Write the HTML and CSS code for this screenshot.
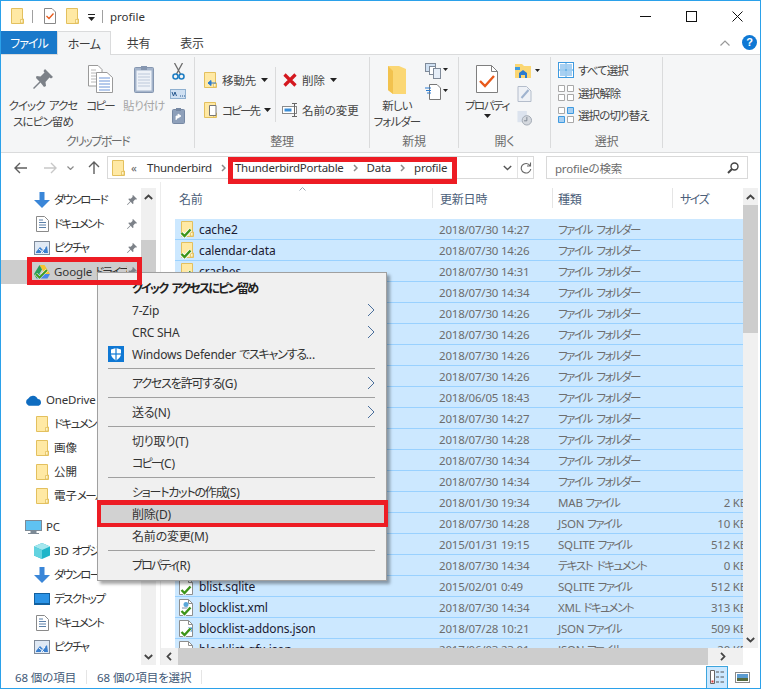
FILE: index.html
```html
<!DOCTYPE html>
<html lang="ja">
<head>
<meta charset="utf-8">
<title>profile</title>
<link rel="stylesheet" href="styles.css">
</head>
<body>
<svg class="defs" width="0" height="0" aria-hidden="true">
  <defs>
    <symbol id="folder" viewBox="0 0 13 16">
      <path d="M.5.5H11.5V11H12.5V15.5H.5Z" fill="#ffe9a4" stroke="#e3c05e"/>
      <path d="M9.5 11.5H12V15H9.5Z" fill="#fff3c8" stroke="#e3c05e" stroke-width=".8"/>
    </symbol>
    <symbol id="check" viewBox="0 0 12 10">
      <path d="M1.500 5 4.500 8 10.500 1.500" fill="none" stroke="#fff" stroke-width="4"/>
      <path d="M1.500 5 4.500 8 10.500 1.500" fill="none" stroke="#3c9418" stroke-width="2.400"/>
    </symbol>
    <symbol id="pin" viewBox="0 0 20 20">
      <path d="M12 0 20 8 18 9.5 16.5 8.5 12.5 13 13 17 11 18 7.5 13.500 1 20 0 19 6.500 12.500 3 9 3.500 7 7.500 7.500 11.500 3.500 10.500 2Z" fill="#7c8188"/>
    </symbol>
    <symbol id="down" viewBox="0 0 16 16">
      <path d="M5.500 0H10.500V8H16L8 16 0 8H5.500Z" fill="#3a86d8"/>
    </symbol>
    <symbol id="doc" viewBox="0 0 13 16">
      <path d="M.5.5H8.500L12.500 4.500V15.500H.5Z" fill="#fff" stroke="#8a8a8a"/>
      <path d="M3 4H7M3 6.500H10M3 9H10M3 11.500H10" stroke="#5a7fa8"/>
    </symbol>
    <symbol id="pic" viewBox="0 0 16 14">
      <rect x=".5" y=".5" width="15" height="13" fill="#dfe9f5" stroke="#7f8a99"/>
      <path d="M2 11 6 6 9 9 13 5 14 12H2Z" fill="#3a7fcf"/>
      <path d="M5 8 10 12M11 7 7 12" stroke="#fff"/>
    </symbol>
    <symbol id="file" viewBox="0 0 16 17">
      <path d="M1.500.5H10.500L14.500 4.500V16.500H1.500Z" fill="#fff" stroke="#8e8e8e"/>
      <path d="M10.500.5V4.500H14.500" fill="none" stroke="#8e8e8e"/>
    </symbol>
    <symbol id="filexml" viewBox="0 0 16 17">
      <path d="M1.500.5H10.500L14.500 4.500V16.500H1.500Z" fill="#fff" stroke="#8e8e8e"/>
      <path d="M10.500.5V4.500H14.500" fill="none" stroke="#8e8e8e"/>
      <circle cx="8" cy="5.500" r="2.500" fill="#5aa7d8"/>
      <path d="M4 9H12M7 11.500H12" stroke="#7a8fa8"/>
    </symbol>
    <symbol id="filejson" viewBox="0 0 16 17">
      <path d="M1.500.5H10.500L14.500 4.500V16.500H1.500Z" fill="#fff" stroke="#8e8e8e"/>
      <path d="M10.500.5V4.500H14.500" fill="none" stroke="#8e8e8e"/>
      <path d="M8 14 13 8.500M10 8.500H13V11.500" fill="none" stroke="#1f7fd0" stroke-width="1.800"/>
    </symbol>
    <symbol id="chev" viewBox="0 0 8 14">
      <path d="M1 1 7 7 1 13" fill="none" stroke="#4a6f9c" stroke-width="1"/>
    </symbol>
    <symbol id="caret" viewBox="0 0 7 4">
      <path d="M0 0H7L3.500 4Z" fill="#222"/>
    </symbol>
    <symbol id="up" viewBox="0 0 9 6">
      <path d="M.8 5 4.500 1.500 8.200 5" fill="none" stroke="#444" stroke-width="1.800"/>
    </symbol>
    <symbol id="dn" viewBox="0 0 9 6">
      <path d="M.8 1 4.500 4.500 8.200 1" fill="none" stroke="#444" stroke-width="1.800"/>
    </symbol>
    <symbol id="lf" viewBox="0 0 6 9">
      <path d="M5 .8 1.500 4.500 5 8.200" fill="none" stroke="#444" stroke-width="1.800"/>
    </symbol>
    <symbol id="rt" viewBox="0 0 6 9">
      <path d="M1 .8 4.500 4.500 1 8.200" fill="none" stroke="#444" stroke-width="1.800"/>
    </symbol>
    <symbol id="crumb" viewBox="0 0 5 8">
      <path d="M1 1 4 4 1 7" fill="none" stroke="#8a8a8a" stroke-width="1.500"/>
    </symbol>
    <symbol id="propdoc" viewBox="0 0 22 28">
      <path d="M.5.5H15.500L21.500 6.500V27.500H.5Z" fill="#fff" stroke="#7f7f7f"/>
      <path d="M15.500.5V6.500H21.500" fill="none" stroke="#7f7f7f"/>
      <path d="M4 16 9 21 18 11" fill="none" stroke="#e8591a" stroke-width="2.400"/>
    </symbol>
  </defs>
</svg>

<div class="window">
  <header class="titlebar">
    <svg class="ico13x16"><use href="#folder"/></svg>
    <span class="vline"></span>
    <svg class="qdoc" viewBox="0 0 12 16"><path d="M.5.5H8L11.500 4V15.500H.5Z" fill="#fff" stroke="#888"/><path d="M2.500 8 5 10.500 9.500 5.500" fill="none" stroke="#e8591a" stroke-width="1.300"/></svg>
    <svg class="ico13x16 qf"><use href="#folder"/></svg>
    <svg class="qarrow" viewBox="0 0 7 7"><path d="M0 0H7V1H0ZM0 3H7L3.500 7Z" fill="#222"/></svg>
    <span class="vline vline-b"></span>
    <span class="wintitle">profile</span>
    <div class="winctl">
      <svg class="ctl" viewBox="0 0 11 11"><path d="M0 5.500H11" stroke="#111"/></svg>
      <svg class="ctl" viewBox="0 0 11 11"><rect x=".5" y=".5" width="10" height="10" fill="none" stroke="#111"/></svg>
      <svg class="ctl" viewBox="0 0 11 11"><path d="M.5.5 10.500 10.500M10.500.5.500 10.500" stroke="#111"/></svg>
    </div>
  </header>

  <nav class="tabs">
    <span class="tab tab-file">ファイル</span>
    <span class="tab tab-home">ホーム</span>
    <span class="tab tab-share">共有</span>
    <span class="tab tab-view">表示</span>
    <div class="tabs-right">
      <svg class="collapse" viewBox="0 0 10 6"><path d="M.5 5.500 5 1 9.500 5.500" fill="none" stroke="#999" stroke-width="1.200"/></svg>
      <span class="help">?</span>
    </div>
  </nav>

  <section class="ribbon">
    <div class="group g-clip">
      <div class="gbody">
        <div class="bigbtn b-pin">
          <svg class="bigicon pinbig"><use href="#pin"/></svg>
          <span class="lab">クイック アクセ<br>スにピン留め</span>
        </div>
        <div class="bigbtn b-copy">
          <svg class="bigicon copyic" viewBox="0 0 25 28">
            <path d="M.5.5H10L14 4.500V21H.5Z" fill="#fff" stroke="#9a9a9a"/>
            <path d="M3 5H8M3 8H11M3 11H11M3 14H11M3 17H11" stroke="#b8b8b8"/>
            <path d="M8.500 7.500H19L24.500 12.500V27.500H8.500Z" fill="#fff" stroke="#9a9a9a"/>
            <path d="M11 13H22M11 16H22M11 19H22M11 22H22M11 25H22" stroke="#6d95d8"/>
          </svg>
          <span class="lab lab-tight">コピー</span>
        </div>
        <div class="bigbtn b-paste">
          <svg class="bigicon pasteic" viewBox="0 0 20 28">
            <rect x=".5" y="2.500" width="19" height="25" rx="1" fill="#a4b4cb" stroke="#8596b0"/>
            <rect x="2.500" y="5.500" width="15" height="20" fill="#eef2f8"/>
            <path d="M4 9H16M4 12H16M4 15H16M4 18H16M4 21H16" stroke="#bcc8da"/>
            <path d="M7 1H13V5H7Z" fill="#8596b0"/>
          </svg>
          <span class="lab muted">貼り付け</span>
        </div>
        <div class="smallstack">
          <svg class="scis" viewBox="0 0 13 17"><path d="M2.500 0 8.500 11M10.500 0 4.500 11" stroke="#6c6c6c" stroke-width="1.300"/><circle cx="3.500" cy="13.500" r="2.500" fill="none" stroke="#1f7fc4" stroke-width="1.600"/><circle cx="9.500" cy="13.500" r="2.500" fill="none" stroke="#1f7fc4" stroke-width="1.600"/></svg>
          <svg class="pathic" viewBox="0 0 16 10"><rect x=".5" y=".5" width="15" height="9" fill="#cfe0f2" stroke="#8fb0d0"/><path d="M2 3 3.500 7 5 3 6.500 7M10 7H11M12 7H13M14 7H15" stroke="#2a5a90" fill="none"/></svg>
          <svg class="shortic" viewBox="0 0 13 16"><rect x=".5" y="1.500" width="12" height="14" rx="1" fill="#8ea0ba" stroke="#7688a3"/><rect x="4" y="0" width="5" height="3" fill="#7688a3"/><path d="M4 12V8H8M6 6 9 8 6 10Z" fill="#fff" stroke="#fff" stroke-width=".8"/></svg>
        </div>
      </div>
      <div class="glabel k">クリップボード</div>
    </div>

    <div class="group g-org">
      <div class="gbody">
        <div class="rowstack c-left">
          <div class="srow">
            <svg class="orgic" viewBox="0 0 13 16"><use href="#folder"/><path d="M4 11H12M4 11 7 8.500V13.500Z" stroke="#2a7bd0" fill="#2a7bd0"/></svg>
            <span class="tx">移動先</span><svg class="cr"><use href="#caret"/></svg>
          </div>
          <div class="srow">
            <svg class="orgic" viewBox="0 0 13 16"><use href="#folder"/><path d="M5.500 3.500H12V13.500H5.500Z" fill="#fff" stroke="#777"/></svg>
            <span class="tx k-org">コピー先</span><svg class="cr"><use href="#caret"/></svg>
          </div>
        </div>
        <span class="gdiv"></span>
        <div class="rowstack c-right">
          <div class="srow">
            <svg class="xic" viewBox="0 0 14 14"><path d="M1.500 1.500 12.500 12.500M12.500 1.500 1.500 12.500" stroke="#d4181f" stroke-width="3.200"/></svg>
            <span class="tx">削除</span><svg class="cr"><use href="#caret"/></svg>
          </div>
          <div class="srow">
            <svg class="renic" viewBox="0 0 16 14"><rect x=".5" y="3.500" width="14" height="7" fill="#fff" stroke="#8a8a8a"/><rect x="2.500" y="5.500" width="7" height="3" fill="#3a8ed8"/><path d="M10 .5H15M12.500.5V13.500M10 13.500H15" stroke="#666"/></svg>
            <span class="tx">名前の変更</span>
          </div>
        </div>
      </div>
      <div class="glabel">整理</div>
    </div>

    <div class="group g-new">
      <div class="gbody">
        <div class="bigbtn b-newf">
          <svg class="bigicon newfic" viewBox="0 0 18 28"><path d="M0 0H11L18 3V28H5L0 24Z" fill="#fbd774"/><path d="M0 0 5 5V28L0 24Z" fill="#f2c24e"/></svg>
          <span class="lab">新しい<br>フォルダー</span>
        </div>
        <div class="newsm">
          <svg class="nsic" viewBox="0 0 23 16"><rect x=".5" y=".5" width="10" height="8" fill="#cfe0f2" stroke="#7f8a99"/><rect x="4.500" y="3.500" width="6" height="8" fill="#fff" stroke="#7f8a99"/><rect x="8.500" y="5.500" width="7" height="10" fill="#e6eef8" stroke="#7f8a99"/><path d="M18 5H23L20.500 8Z" fill="#222"/></svg>
          <svg class="nsic" viewBox="0 0 23 16"><path d="M4.500.5H12L15.500 4V15.500H4.500Z" fill="#fff" stroke="#777"/><path d="M0 4H6M1 6.500H6M2 9H6" stroke="#2a7bd0"/><path d="M18 5H23L20.500 8Z" fill="#222"/></svg>
        </div>
      </div>
      <div class="glabel">新規</div>
    </div>

    <div class="group g-open">
      <div class="gbody">
        <div class="bigbtn b-prop">
          <svg class="bigicon propic"><use href="#propdoc"/></svg>
          <span class="lab lab-prop">プロパティ</span>
          <svg class="cr crb"><use href="#caret"/></svg>
        </div>
        <div class="opensm">
          <svg class="osic" viewBox="0 0 25 14"><path d="M0 0H7L9 2H16V14H0Z" fill="#fbd774"/><path d="M4 14V9L8 6 12 9V14H10V11H6V14Z" fill="#2a7bd0"/><rect x="0" y="3" width="5" height="3" fill="#3d9ae0"/><path d="M20 5H25L22.500 8Z" fill="#222"/></svg>
          <svg class="osic2" viewBox="0 0 14 16"><path d="M.5.5H9L13.500 5V15.500H.5Z" fill="#eef1f6" stroke="#b4bdcb"/><path d="M4 12 11 4" stroke="#9fb3cf" stroke-width="2"/></svg>
          <svg class="osic2" viewBox="0 0 16 16"><rect x=".5" y=".5" width="10" height="12" fill="#dce3ee"/><circle cx="10.500" cy="10.500" r="5" fill="#d4d8de" stroke="#a0a7b2"/><path d="M10.500 7V11H7.500" stroke="#7d8591" fill="none"/></svg>
        </div>
      </div>
      <div class="glabel">開く</div>
    </div>

    <div class="group g-sel">
      <div class="gbody">
        <div class="sellist">
          <div class="srow sel">
            <svg class="selic" viewBox="0 0 16 16"><rect x=".5" y=".5" width="15" height="15" fill="#fff" stroke="#3e9ae0"/><path d="M2 2H7V7H2ZM9 2H14V7H9ZM2 9H7V14H2ZM9 9H14V14H9Z" fill="#a8d0f2"/><path d="M1 8H15M8 1V15" stroke="#3e9ae0" stroke-width="1"/></svg>
            <span>すべて選択</span>
          </div>
          <div class="srow sel">
            <svg class="selic" viewBox="0 0 16 16"><path d="M.5.5H6.500V6.500H.5ZM9.500.5H15.500V6.500H9.500ZM.5 9.500H6.500V15.500H.5ZM9.500 9.500H15.500V15.500H9.500Z" fill="#fff" stroke="#a8a8a8"/></svg>
            <span>選択解除</span>
          </div>
          <div class="srow sel">
            <svg class="selic" viewBox="0 0 16 16"><path d="M.5 9.500H6.500V15.500H.5ZM9.500.5H15.500V6.500H9.500Z" fill="#a8d0f2" stroke="#3e9ae0"/><path d="M.5.500H6.500V6.500H.5ZM9.500 9.500H15.500V15.500H9.500Z" fill="#fff" stroke="#a8a8a8"/></svg>
            <span>選択の切り替え</span>
          </div>
        </div>
      </div>
      <div class="glabel">選択</div>
    </div>
  </section>

  <section class="addressbar">
    <svg class="nv nv-back" viewBox="0 0 13 12"><path d="M6 1 1 6 6 11M1 6H13" fill="none" stroke="#5f5f5f" stroke-width="1.400"/></svg>
    <svg class="nv nv-fwd" viewBox="0 0 13 12"><path d="M7 1 12 6 7 11M12 6H0" fill="none" stroke="#c8c8c8" stroke-width="1.400"/></svg>
    <svg class="nv-rec" viewBox="0 0 7 4"><path d="M.5.5 3.500 3.500 6.500.5" fill="none" stroke="#8a8a8a" stroke-width="1.200"/></svg>
    <svg class="nv nv-up" viewBox="0 0 12 13"><path d="M1 6 6 1 11 6M6 1V13" fill="none" stroke="#5f5f5f" stroke-width="1.400"/></svg>
    <div class="addr">
      <svg class="addr-f"><use href="#folder"/></svg>
      <span class="crumbmark">«</span>
      <span class="cb">Thunderbird</span><svg class="sepch"><use href="#crumb"/></svg>
      <span class="cb">ThunderbirdPortable</span><svg class="sepch"><use href="#crumb"/></svg>
      <span class="cb">Data</span><svg class="sepch"><use href="#crumb"/></svg>
      <span class="cb">profile</span>
      <div class="addr-end">
        <svg class="addr-dd" viewBox="0 0 9 6"><path d="M.8 1 4.500 4.500 8.200 1" fill="none" stroke="#555" stroke-width="1.400"/></svg>
        <span class="addr-sep"></span>
        <svg class="addr-rf" viewBox="0 0 12 12"><path d="M10 3.500A4.800 4.800 0 1 0 10.800 7M10.500 .5V4H7" fill="none" stroke="#666" stroke-width="1.100"/></svg>
      </div>
    </div>
    <div class="search">
      <span class="search-ph">profileの検索</span>
      <svg class="search-ic" viewBox="0 0 12 12"><circle cx="7.500" cy="4.500" r="3.500" fill="none" stroke="#444" stroke-width="1.400"/><path d="M5 7 1 11" stroke="#444" stroke-width="2"/></svg>
    </div>
  </section>

  <main class="main">
    <aside class="navpane">
      <div class="navlist">
        <div class="nav"><svg class="ni ni-dl"><use href="#down"/></svg><span class="nt nk">ダウンロード</span><svg class="npin"><use href="#pin"/></svg></div>
        <div class="nav"><svg class="ni ni-doc"><use href="#doc"/></svg><span class="nt nk">ドキュメント</span><svg class="npin"><use href="#pin"/></svg></div>
        <div class="nav"><svg class="ni ni-pic"><use href="#pic"/></svg><span class="nt nk">ピクチャ</span><svg class="npin"><use href="#pin"/></svg></div>
        <div class="nav nav-hl">
          <svg class="ni ni-gd" viewBox="0 0 16 16"><path d="M5.500 1H10.500L16 10H11Z" fill="#f4c430"/><path d="M5.500 1 0 10 2.500 14.500 8 5.500Z" fill="#2a9d5c"/><path d="M2.500 14.500H13.500L16 10H5Z" fill="#4a86e8"/><path d="M2 10 5.500 13.500 13 6" fill="none" stroke="#fff" stroke-width="3"/><path d="M2 10 5.500 13.500 13 6" fill="none" stroke="#3f9a22" stroke-width="2"/></svg>
          <span class="nt">Google <span class="nk">ドライブ</span></span><svg class="npin"><use href="#pin"/></svg>
        </div>
        <div class="nav nav-top nav-od">
          <svg class="ni-top" viewBox="0 0 18 11"><path d="M4 11A4 4 0 0 1 3.500 3.500 5.500 5.500 0 0 1 13.500 4 3.600 3.600 0 0 1 14.500 11Z" fill="#0f6cc0"/></svg>
          <span class="nt2">OneDrive</span>
        </div>
        <div class="nav"><svg class="ni ni-fo"><use href="#folder"/></svg><span class="nt nk">ドキュメント</span></div>
        <div class="nav"><svg class="ni ni-fo"><use href="#folder"/></svg><span class="nt">画像</span></div>
        <div class="nav"><svg class="ni ni-fo"><use href="#folder"/></svg><span class="nt">公開</span></div>
        <div class="nav"><svg class="ni ni-fo"><use href="#folder"/></svg><span class="nt">電子<span class="nk">メール</span></span></div>
        <div class="nav nav-top nav-pc">
          <svg class="ni-top" viewBox="0 0 17 15"><rect x=".5" y=".5" width="16" height="10" fill="#5fc2f2" stroke="#7d8a96"/><path d="M6 11H11V13H6ZM3 13.500H14" fill="#7d8a96" stroke="#7d8a96"/></svg>
          <span class="nt2">PC</span>
        </div>
        <div class="nav"><svg class="ni ni-3d" viewBox="0 0 16 16"><path d="M8 0 16 3.500V12.500L8 16 0 12.500V3.500Z" fill="#1fb5c9"/><path d="M8 7 16 3.500 8 0 0 3.500Z" fill="#a5e7ee"/><path d="M8 7V16L0 12.500V3.500Z" fill="#63d3e0"/></svg><span class="nt">3D <span class="nk">オブジェクト</span></span></div>
        <div class="nav"><svg class="ni ni-dl"><use href="#down"/></svg><span class="nt nk">ダウンロード</span></div>
        <div class="nav"><svg class="ni ni-desk" viewBox="0 0 16 12"><rect x=".5" y=".5" width="15" height="11" fill="#2b93e6" stroke="#12609f"/><path d="M1 10H15V11H1Z" fill="#12609f"/></svg><span class="nt nk">デスクトップ</span></div>
        <div class="nav"><svg class="ni ni-doc"><use href="#doc"/></svg><span class="nt nk">ドキュメント</span></div>
        <div class="nav"><svg class="ni ni-pic"><use href="#pic"/></svg><span class="nt nk">ピクチャ</span></div>
      </div>
      <div class="navscroll">
        <svg class="sa"><use href="#up"/></svg>
        <div class="navthumb"></div>
        <svg class="sa sa-end"><use href="#dn"/></svg>
      </div>
    </aside>

    <div class="content">
      <div class="contenttop">
        <div class="listarea">
          <div class="colhead">
            <span class="ch ch-name">名前<svg class="sortcaret" viewBox="0 0 7 4"><path d="M.5 3.500 3.500.5 6.500 3.500" fill="none" stroke="#9aa5b4"/></svg></span>
            <span class="ch ch-date">更新日時</span>
            <span class="ch ch-type">種類</span>
            <span class="ch ch-size k">サイズ</span>
          </div>
          <div class="rows">
            <div class="row"><span class="c-name"><span class="fi"><svg class="fi-f"><use href="#folder"/></svg><svg class="fi-c"><use href="#check"/></svg></span>cache2</span><span class="c-date">2018/07/30 14:27</span><span class="c-type k">ファイル フォルダー</span><span class="c-size"></span></div>
            <div class="row"><span class="c-name"><span class="fi"><svg class="fi-f"><use href="#folder"/></svg><svg class="fi-c"><use href="#check"/></svg></span>calendar-data</span><span class="c-date">2018/07/30 14:26</span><span class="c-type k">ファイル フォルダー</span><span class="c-size"></span></div>
            <div class="row"><span class="c-name"><span class="fi"><svg class="fi-f"><use href="#folder"/></svg><svg class="fi-c"><use href="#check"/></svg></span>crashes</span><span class="c-date">2018/07/30 14:31</span><span class="c-type k">ファイル フォルダー</span><span class="c-size"></span></div>
            <div class="row"><span class="c-name"></span><span class="c-date">2018/07/30 14:34</span><span class="c-type k">ファイル フォルダー</span><span class="c-size"></span></div>
            <div class="row"><span class="c-name"></span><span class="c-date">2018/07/30 14:26</span><span class="c-type k">ファイル フォルダー</span><span class="c-size"></span></div>
            <div class="row"><span class="c-name"></span><span class="c-date">2018/07/30 14:26</span><span class="c-type k">ファイル フォルダー</span><span class="c-size"></span></div>
            <div class="row"><span class="c-name"></span><span class="c-date">2018/07/30 14:26</span><span class="c-type k">ファイル フォルダー</span><span class="c-size"></span></div>
            <div class="row"><span class="c-name"></span><span class="c-date">2018/07/30 14:26</span><span class="c-type k">ファイル フォルダー</span><span class="c-size"></span></div>
            <div class="row"><span class="c-name"></span><span class="c-date">2018/06/05 18:43</span><span class="c-type k">ファイル フォルダー</span><span class="c-size"></span></div>
            <div class="row"><span class="c-name"></span><span class="c-date">2018/07/30 14:27</span><span class="c-type k">ファイル フォルダー</span><span class="c-size"></span></div>
            <div class="row"><span class="c-name"></span><span class="c-date">2018/07/30 14:28</span><span class="c-type k">ファイル フォルダー</span><span class="c-size"></span></div>
            <div class="row"><span class="c-name"></span><span class="c-date">2018/07/30 14:34</span><span class="c-type k">ファイル フォルダー</span><span class="c-size"></span></div>
            <div class="row"><span class="c-name"></span><span class="c-date">2018/07/30 14:34</span><span class="c-type k">ファイル フォルダー</span><span class="c-size"></span></div>
            <div class="row"><span class="c-name"></span><span class="c-date">2018/01/30 19:34</span><span class="c-type">MAB <span class="k">ファイル</span></span><span class="c-size">2 KB</span></div>
            <div class="row"><span class="c-name"></span><span class="c-date">2018/07/30 14:28</span><span class="c-type">JSON <span class="k">ファイル</span></span><span class="c-size">10 KB</span></div>
            <div class="row"><span class="c-name"></span><span class="c-date">2015/01/31 19:15</span><span class="c-type">SQLITE <span class="k">ファイル</span></span><span class="c-size">512 KB</span></div>
            <div class="row"><span class="c-name"></span><span class="c-date">2018/07/30 14:34</span><span class="c-type k">テキスト ドキュメント</span><span class="c-size">0 KB</span></div>
            <div class="row"><span class="c-name"><span class="fi"><svg class="fi-f fi-file"><use href="#file"/></svg><svg class="fi-c"><use href="#check"/></svg></span>blist.sqlite</span><span class="c-date">2015/02/01 0:49</span><span class="c-type">SQLITE <span class="k">ファイル</span></span><span class="c-size">512 KB</span></div>
            <div class="row"><span class="c-name"><span class="fi"><svg class="fi-f fi-file"><use href="#filexml"/></svg><svg class="fi-c"><use href="#check"/></svg></span>blocklist.xml</span><span class="c-date">2018/07/30 14:34</span><span class="c-type">XML <span class="k">ドキュメント</span></span><span class="c-size">313 KB</span></div>
            <div class="row"><span class="c-name"><span class="fi"><svg class="fi-f fi-file"><use href="#filejson"/></svg><svg class="fi-c"><use href="#check"/></svg></span>blocklist-addons.json</span><span class="c-date">2018/07/28 10:21</span><span class="c-type">JSON <span class="k">ファイル</span></span><span class="c-size">509 KB</span></div>
            <div class="row"><span class="c-name"><span class="fi"><svg class="fi-f fi-file"><use href="#file"/></svg></span>blocklist-gfx.json</span><span class="c-date">2017/06/03 23:01</span><span class="c-type">JSON <span class="k">ファイル</span></span><span class="c-size">20 KB</span></div>
          </div>
        </div>
        <div class="vscroll">
          <svg class="sa"><use href="#up"/></svg>
          <div class="vthumb"></div>
          <svg class="sa sa-end"><use href="#dn"/></svg>
        </div>
      </div>
      <div class="hscroll">
        <svg class="sah"><use href="#lf"/></svg>
        <div class="hthumb"></div>
        <svg class="sah"><use href="#rt"/></svg>
      </div>
    </div>
  </main>

  <footer class="status">
    <span class="st st-a">68 個の項目</span>
    <span class="st-div"></span>
    <span class="st st-b">68 個の項目を選択</span>
    <span class="st-div"></span>
    <div class="viewbtns">
      <span class="vb vb-on"><svg class="vb-ic" viewBox="0 0 16 16"><path d="M1.500 1.500H5.500V14.500H1.500Z" fill="#fff" stroke="#666"/><path d="M2.500 11.500H4.500V13.500H2.500Z" fill="#d33"/><path d="M7 3H10M11.500 3H15M7 8H10M11.500 8H15M7 13H10M11.500 13H15" stroke="#555"/></svg></span>
      <span class="vb"><svg class="vb-ic2" viewBox="0 0 15 11"><rect x=".5" y=".5" width="14" height="10" fill="#fff" stroke="#8a8a8a"/><path d="M2 2H13V6L2 6Z" fill="#5b9bd0"/><path d="M2 6H13V9H2Z" fill="#556b3f"/></svg></span>
    </div>
  </footer>

  <div class="menu">
    <div class="mi mi-b">クイック アクセスにピン留め</div>
    <div class="mi">7-Zip<svg class="mch"><use href="#chev"/></svg></div>
    <div class="mi">CRC SHA<svg class="mch"><use href="#chev"/></svg></div>
    <div class="mi">
      <svg class="mshield" viewBox="0 0 16 16"><rect width="16" height="16" fill="#0f78d4"/><path d="M8 2 13 3.500V8C13 11 10.500 13 8 14.500 5.500 13 3 11 3 8V3.500Z" fill="#fff"/><path d="M7.500 2V14.500M8.500 2V14.500M3 7.500H13M3 8.500H13" stroke="#0f78d4" stroke-width=".6"/></svg>
      <span>Windows Defender <span class="mk">でスキャンする</span>...</span>
    </div>
    <div class="msep"></div>
    <div class="mi"><span><span class="mk">アクセスを許可する</span>(G)</span><svg class="mch"><use href="#chev"/></svg></div>
    <div class="msep"></div>
    <div class="mi">送る(N)<svg class="mch"><use href="#chev"/></svg></div>
    <div class="msep"></div>
    <div class="mi">切り取り(T)</div>
    <div class="mi"><span><span class="mk2">コピー</span>(C)</span></div>
    <div class="msep"></div>
    <div class="mi"><span><span class="mk">ショートカットの作成</span>(S)</span></div>
    <div class="mi mi-hl">削除(D)</div>
    <div class="mi">名前の変更(M)</div>
    <div class="msep"></div>
    <div class="mi"><span><span class="mk2">プロパティ</span>(R)</span></div>
  </div>

  <div class="callout call-addr"></div>
  <div class="callout call-drive"></div>
  <div class="callout call-del"></div>
</div>
</body>
</html>
```

FILE: styles.css
```css
* { box-sizing: border-box; }
html, body { margin: 0; padding: 0; }
body {
  width: 761px; height: 689px; overflow: hidden; background: #fff;
  font-family: "Noto Sans", "Noto Sans CJK JP", sans-serif;
  font-size: 11.5px; color: #222;
  font-feature-settings: "palt";
  letter-spacing: -.2px;
}
svg { display: block; flex: none; }
.defs { position: absolute; }
.k { letter-spacing: -1.5px; word-spacing: 3px; }

.window {
  position: relative; width: 761px; height: 689px; overflow: hidden;
  border: 1px solid #2ba1ea; display: flex; flex-direction: column; background: #fff;
}

/* title bar */
.titlebar { height: 30px; flex: none; display: flex; align-items: center; padding-left: 10px; }
.ico13x16 { width: 13px; height: 16px; }
.vline { width: 1px; height: 13px; background: #a0a0a0; margin: 0 8px; }
.vline-b { margin: 0 7px; }
.qdoc { width: 12px; height: 16px; margin-left: 3px; }
.qf { margin-left: 10px; }
.qarrow { width: 7px; height: 7px; margin-left: 9px; margin-top: 2px; }
.wintitle { font-size: 11.5px; color: #333; letter-spacing: 0; }
.winctl { margin-left: auto; display: flex; gap: 35px; padding-right: 17px; }
.ctl { width: 11px; height: 11px; }

/* tabs */
.tabs { height: 24px; flex: none; display: flex; align-items: stretch; position: relative; border-bottom: 1px solid #dadbdc; }
.tab { display: flex; align-items: center; justify-content: center; color: #3d3d3d; font-size: 12px; }
.tab-file { width: 56px; background: #1979ca; color: #fff; height: 23px; letter-spacing: -1px; }
.tab-home { width: 54px; height: 24px; background: #f5f6f7; border: 1px solid #dadbdc; border-bottom: 0; letter-spacing: -.6px; }
.tab-share { width: 55px; }
.tab-view { width: 52px; }
.tabs-right { margin-left: auto; display: flex; align-items: center; gap: 12px; padding-right: 3px; }
.collapse { width: 10px; height: 6px; }
.help { width: 15px; height: 15px; border-radius: 50%; background: #0f78d4; color: #fff; font: bold 11px/15px "Liberation Sans", sans-serif; letter-spacing: 0; text-align: center; }

/* ribbon */
.ribbon { height: 98px; flex: none; background: #f5f6f7; border-bottom: 1px solid #dadbdc; display: flex; color: #444; }
.group { display: flex; flex-direction: column; border-right: 1px solid #dadbdc; margin: 2px 0 4px; flex: none; }
.gbody { flex: 1; display: flex; min-height: 0; }
.glabel { height: 19px; text-align: center; color: #6c6c6c; font-size: 12px; line-height: 25px; }
.g-clip { width: 194px; }
.g-org { width: 175px; }
.g-new { width: 89px; }
.g-open { width: 92px; }
.g-sel { width: 112px; }

.bigbtn { display: flex; flex-direction: column; align-items: center; }
.lab { line-height: 16px; text-align: center; white-space: nowrap; font-size: 11.5px; letter-spacing: -.9px; word-spacing: 2px; margin-top: 1px; }
.lab-tight { letter-spacing: -1.8px; }
.lab-prop { letter-spacing: -1.4px; }
.muted { color: #a6a6a6; letter-spacing: -.5px; }
.bigicon { margin-top: 8px; }
.b-pin { width: 76px; margin-left: 4px; }
.pinbig { width: 20px; height: 20px; margin-top: 12px; margin-bottom: 8px; }
.b-copy { width: 36px; margin-left: 1px; }
.copyic { width: 25px; height: 28px; margin-bottom: 4px; }
.b-paste { width: 52px; }
.pasteic { width: 20px; height: 28px; margin-bottom: 4px; }
.smallstack { display: flex; flex-direction: column; align-items: center; padding-top: 6px; width: 16px; }
.scis { width: 13px; height: 17px; }
.pathic { width: 16px; height: 10px; margin-top: 9px; }
.shortic { width: 13px; height: 16px; margin-top: 9px; }

.rowstack { display: flex; flex-direction: column; gap: 8px; padding-top: 12px; }
.c-left { margin-left: 9px; width: 71px; }
.c-right { margin-left: 7px; }
.srow { display: flex; align-items: center; height: 22px; gap: 5px; white-space: nowrap; font-size: 11.5px; letter-spacing: -.1px; }
.k-org { letter-spacing: -1.8px; }
.orgic { width: 13px; height: 16px; }
.cr { width: 7px; height: 4px; }
.gdiv { width: 1px; height: 55px; background: #dadbdc; margin-top: 10px; }
.xic { width: 14px; height: 14px; }
.renic { width: 16px; height: 14px; margin-left: -1px; margin-right: -1px; }

.b-newf { width: 54px; }
.newfic { width: 18px; height: 28px; margin-top: 9px; margin-bottom: 3px; }
.newsm { display: flex; flex-direction: column; gap: 5px; padding-top: 6px; margin-left: 1px; }
.nsic { width: 23px; height: 16px; }

.b-prop { width: 56px; }
.propic { width: 22px; height: 28px; margin-bottom: 4px; }
.crb { margin: 0; }
.opensm { display: flex; flex-direction: column; gap: 8px; padding-top: 7px; align-items: flex-start; }
.osic { width: 25px; height: 14px; }
.osic2 { width: 15px; height: 16px; margin-left: 2px; }

.sellist { display: flex; flex-direction: column; padding-top: 2px; margin-left: 7px; }
.sel { height: 22.5px; gap: 4px; letter-spacing: -.9px; }
.selic { width: 16px; height: 16px; }

/* address */
.addressbar { height: 29px; flex: none; display: flex; align-items: center; position: relative; }
.nv { width: 13px; height: 12px; }
.nv-back { margin-left: 13px; }
.nv-fwd { margin-left: 17px; }
.nv-rec { width: 7px; height: 4px; margin-left: 10px; }
.nv-up { width: 12px; height: 13px; margin-left: 14px; }
.addr {
  width: 427px; height: 23px; margin-left: 7px; border: 1px solid #d9d9d9;
  display: flex; align-items: center; color: #333; font-size: 11.5px; white-space: nowrap;
}
.addr-f { width: 13px; height: 16px; margin-left: 4px; }
.crumbmark { margin: 0 9px 0 6px; color: #666; width: 7px; }
.cb { letter-spacing: -.25px; }
.sepch { width: 5px; height: 8px; margin: 0 9px; }
.addr-end { margin-left: auto; display: flex; align-items: center; }
.addr-dd { width: 9px; height: 6px; margin-right: 5px; }
.addr-sep { width: 1px; height: 21px; background: #e3e3e3; }
.addr-rf { width: 12px; height: 12px; margin: 0 1px 0 2px; }
.search {
  width: 202px; height: 23px; margin-left: 12px; border: 1px solid #d9d9d9;
  display: flex; align-items: center; justify-content: space-between; padding: 0 8px;
  color: #6d6d6d; font-size: 11.5px;
}
.search-ic { width: 12px; height: 12px; }

/* main */
.main { flex: 1; min-height: 0; display: flex; }
.navpane { width: 155px; flex: none; display: flex; padding-top: 6px; height: 100%; }
.navlist { width: 140px; flex: none; overflow: hidden; height: 477px; }
.nav { height: 24px; display: flex; align-items: center; padding-left: 33px; position: relative; color: #333; white-space: nowrap; }
.nav-hl { background: #cdcdcd; }
.ni { width: 16px; height: 16px; }
.ni-doc { width: 13px; margin-left: 2px; margin-right: 1px; }
.ni-pic { width: 16px; height: 14px; }
.ni-fo { width: 13px; margin-left: 2px; margin-right: 1px; }
.ni-desk { height: 12px; }
.nt { margin-left: 4px; flex: 1; overflow: hidden; padding-bottom: 2px; letter-spacing: -.1px; }
.nk { letter-spacing: -1.6px; }
.npin { width: 10px; height: 10px; margin-right: 4px; }
.nav-top { padding-left: 24px; }
.ni-top { width: 17px; height: 15px; }
.nt2 { margin-left: 4px; padding-bottom: 2px; }
.nav-od { margin-top: 104px; }
.nav-pc { margin-top: 7px; }
.navscroll { width: 15px; flex: none; background: #f0f0f0; height: 477px; display: flex; flex-direction: column; align-items: center; }
.sa { width: 9px; height: 6px; margin-top: 6px; margin-bottom: 5px; flex: none; }
.sa-end { margin: auto 0 5px; }
.navthumb { width: 15px; height: 260px; background: #cdcdcd; margin-top: 35px; }

.content { flex: 1; min-width: 0; margin-left: 4px; display: flex; flex-direction: column; border-left: 1px solid #ececec; }
.contenttop { flex: 1; min-height: 0; display: flex; }
.listarea { width: 582px; flex: none; display: flex; flex-direction: column; overflow: hidden; }
.colhead { height: 37px; flex: none; position: relative; display: grid; grid-template-columns: 272px 120px 120px 70px; padding: 6px 0 12px; color: #4c607a; font-size: 12px; }
.ch { display: flex; align-items: center; padding-left: 18px; padding-top: 2px; border-right: 1px solid #e5e5e5; position: relative; }
.ch-date { padding-left: 7px; }
.ch-type { padding-left: 5px; }
.ch-size { padding-left: 7px; border-right: 0; }
.sortcaret { position: absolute; left: 138px; top: -1px; width: 7px; height: 4px; }
.rows { flex: 1; min-height: 0; overflow: hidden; margin-left: 14px; }
.row {
  height: 21px; background: #cce8ff; border-bottom: 1px solid #99d1ff;
  display: grid; grid-template-columns: 264px 119px 114px 78px; align-items: center;
  color: #6d6d6d; white-space: nowrap; overflow: hidden;
}
.c-name { display: flex; align-items: center; color: #1b1b33; padding-left: 3px; font-size: 12px; letter-spacing: -.1px; }
.c-date { letter-spacing: -.2px; }
.c-size { text-align: right; padding-right: 3px; }
.fi { position: relative; width: 16px; height: 17px; margin-right: 5px; flex: none; }
.fi-f { width: 13px; height: 16px; margin-left: 3px; }
.fi-file { width: 16px; height: 17px; margin-left: 0; }
.fi-c { position: absolute; left: 2px; bottom: 0; width: 12px; height: 10px; }
.vscroll { width: 15px; flex: none; margin-top: 6px; background: #f0f0f0; display: flex; flex-direction: column; align-items: center; }
.vthumb { width: 15px; height: 128px; background: #cdcdcd; }
.hscroll { height: 17px; flex: none; width: 582px; background: #f0f0f0; display: flex; align-items: center; }
.sah { width: 6px; height: 9px; margin: 0 5px; flex: none; }
.hthumb { width: 530px; height: 17px; background: #cdcdcd; margin: 0 7px 0 1px; }

/* status */
.status { height: 23px; flex: none; display: flex; align-items: center; color: #3e5776; padding-left: 14px; letter-spacing: -.1px; border-top: 1px solid #fff; position: relative; }
.st-div { width: 1px; height: 14px; background: #e5e5e5; margin: 0 10px; }
.viewbtns { margin-left: auto; display: flex; align-items: center; gap: 3px; padding-right: 7px; }
.vb { width: 22px; height: 23px; display: flex; align-items: center; justify-content: center; }
.vb-on { background: #cce8ff; border: 1px solid #3da5dd; }
.vb-ic { width: 16px; height: 16px; }
.vb-ic2 { width: 15px; height: 11px; }

/* context menu */
.menu {
  position: absolute; left: 96px; top: 271px; width: 290px; height: 309px;
  background: #f0f0f0; border: 1px solid #a0a0a0; padding: 4px 2px;
  box-shadow: 3px 3px 3px rgba(0,0,0,.35); color: #333; font-size: 12px;
}
.mi { height: 22px; display: flex; align-items: center; padding-left: 32px; position: relative; white-space: nowrap; }
.mi-b { font-weight: 700; color: #222; letter-spacing: -1.8px; word-spacing: 3px; }
.mi-hl { background: #d2d2d2; }
.mk { letter-spacing: -1.2px; }
.mk2 { letter-spacing: -1.9px; }
.mch { position: absolute; left: 267px; top: 4px; width: 8px; height: 14px; }
.mshield { position: absolute; left: 8px; top: 3px; width: 16px; height: 16px; }
.msep { height: 7px; position: relative; margin: 0 1px; }
.msep::after { content: ""; position: absolute; left: 7px; right: 8px; top: 3px; height: 1px; background: #a0a0a0; }

/* red callouts */
.callout { position: absolute; border: 5px solid #ed1c24; }
.call-addr { left: 227px; top: 156px; width: 229px; height: 27px; }
.call-drive { left: 26px; top: 256px; width: 115px; height: 28px; }
.call-del { left: 96px; top: 499px; width: 291px; height: 27px; border-width: 5px 4px 4px; }
```
